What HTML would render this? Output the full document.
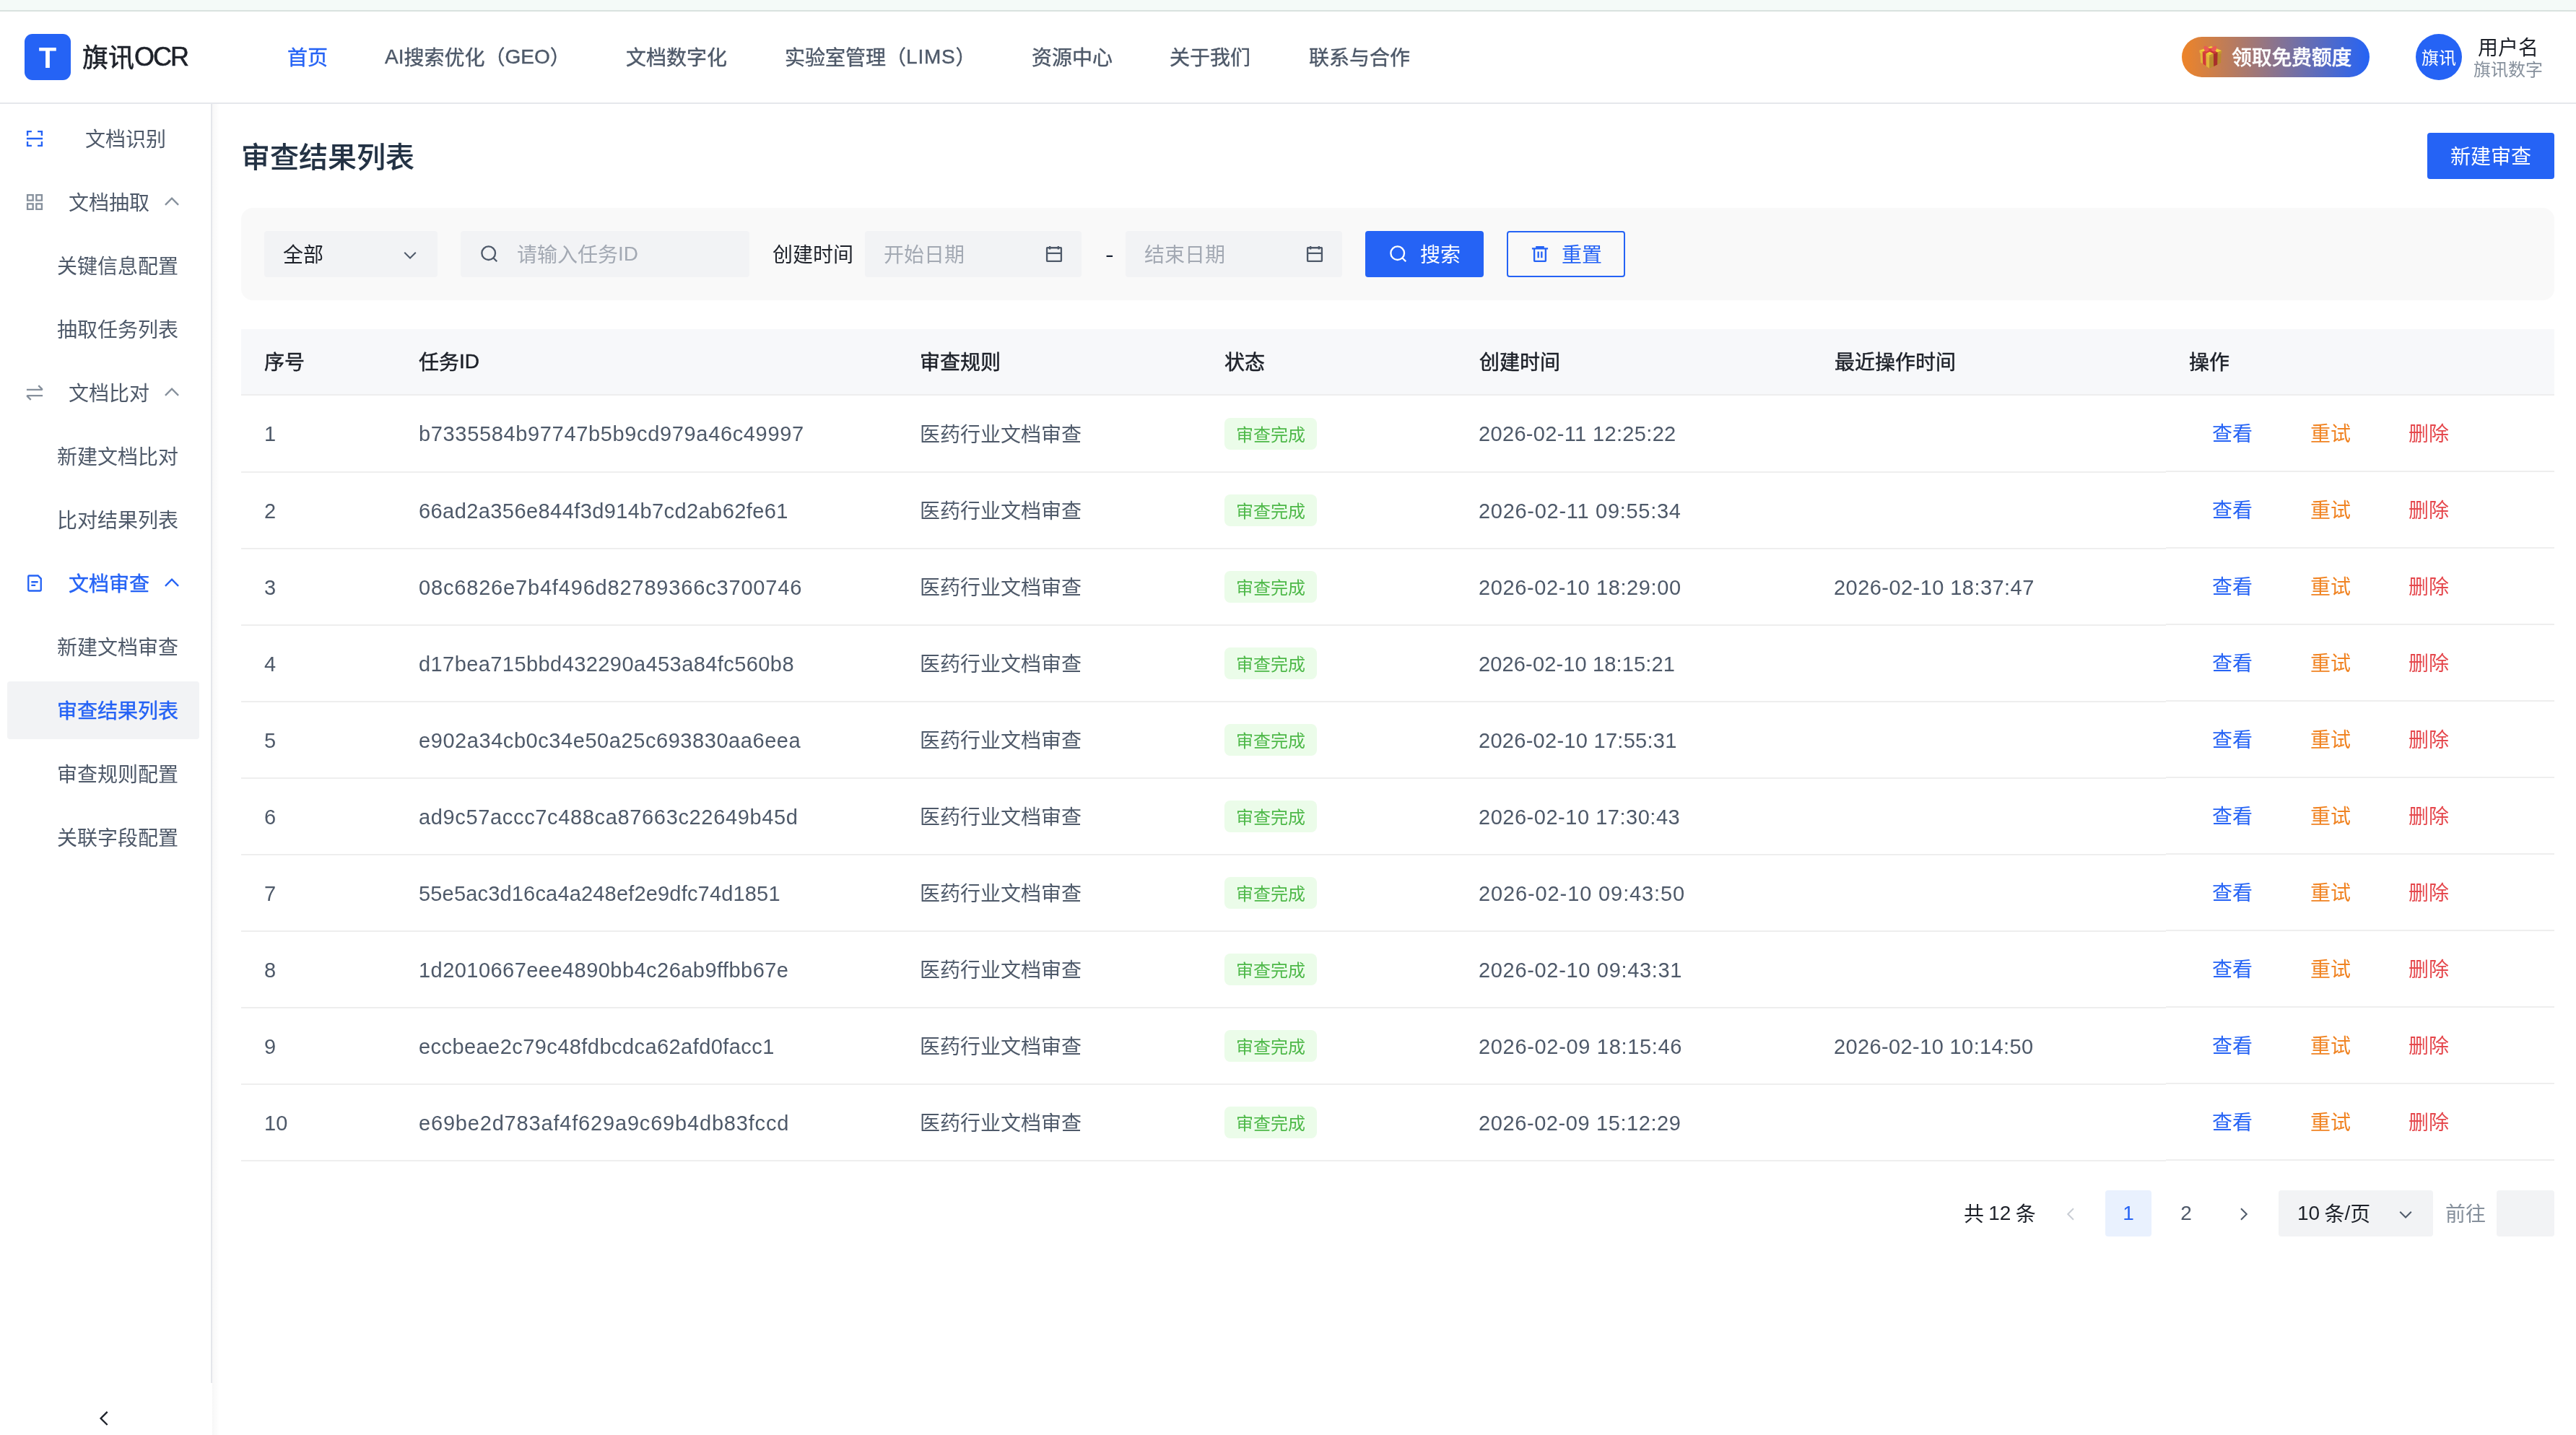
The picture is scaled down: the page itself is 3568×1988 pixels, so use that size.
<!DOCTYPE html><html lang="zh-CN"><head><meta charset="utf-8"><title>审查结果列表</title><style>
*{box-sizing:border-box;margin:0;padding:0}
html,body{width:3568px;height:1988px;overflow:hidden;background:#fff}
body{position:relative;font-family:"Liberation Sans","Noto Sans CJK SC",sans-serif;font-size:28px;color:#1d2129;-webkit-font-smoothing:antialiased;will-change:transform}
.abs{position:absolute}
.c{position:relative;top:2px}
.ic{display:block;flex:none}
.strip{left:0;top:0;width:3568px;height:14px;background:#f4faf8}
.stripb{left:0;top:14px;width:3568px;height:2px;background:#d9e2df}
.hdrb{left:0;top:142px;width:3568px;height:2px;background:#e5e7ec}
.logo{left:34px;top:47px;width:64px;height:64px;border-radius:11px;background:#2563f5;color:#fff;font-weight:700;font-size:40px;line-height:66px;text-align:center}
.brand{left:114px;top:47px;height:64px;line-height:64px;font-size:36px;font-weight:400;-webkit-text-stroke:.55px;color:#1d2129;white-space:nowrap}
.nav{top:51px;height:56px;line-height:56px;font-size:28px;font-weight:400;-webkit-text-stroke:.4px;color:#4e5969;white-space:nowrap}
.nav.on{color:#2563f5}
.pill{left:3022px;top:51px;width:260px;height:56px;border-radius:28px;background:linear-gradient(90deg,#ee8428 0%,#2563f5 100%);color:#fff;font-weight:500;-webkit-text-stroke:.3px;letter-spacing:-.3px;font-size:28px;line-height:56px;white-space:nowrap}
.avatar{left:3346px;top:47px;width:64px;height:64px;border-radius:50%;background:#2563f5;color:#fff;font-size:24px;line-height:64px;text-align:center}
.uname{left:3410px;top:47px;width:128px;text-align:center;font-size:28px;line-height:36px;color:#1d2129}
.uorg{left:3410px;top:80px;width:128px;text-align:center;font-size:24px;line-height:30px;color:#86909c}
.sideb{left:292px;top:144px;width:2px;height:1772px;background:#e5e6eb}
.sideshadow{left:294px;top:144px;width:10px;height:1844px;background:linear-gradient(90deg,rgba(0,0,0,.03),rgba(0,0,0,0))}
.mi{left:10px;width:266px;height:80px;line-height:80px;font-size:28px;color:#4e5969;white-space:nowrap;border-radius:4px}
.mi.sel{background:#f2f3f5;color:#2563f5;-webkit-text-stroke:.45px}
.mi.act{color:#2563f5;-webkit-text-stroke:.45px}
.mi .t{position:absolute;top:0}
.mi .ic{position:absolute;top:26px}
.title{left:334px;top:184px;height:64px;line-height:64px;font-size:40px;font-weight:500;-webkit-text-stroke:.15px;color:#233244;white-space:nowrap}
.btn{height:64px;line-height:64px;border-radius:4px;font-size:28px;white-space:nowrap;text-align:center}
.btn.pri{background:#2563f5;color:#fff}
.btn.out{border:2px solid #2563f5;color:#2563f5;background:transparent;line-height:60px}
.filter{left:334px;top:288px;width:3204px;height:128px;border-radius:16px;background:#f9f9f9}
.inp{top:320px;height:64px;line-height:64px;border-radius:4px;background:#f2f3f5;font-size:28px;white-space:nowrap}
.ph{color:#a3a9b3}
.th{left:334px;top:456px;width:3204px;height:90px;background:#f7f8fa}
.thb{left:334px;top:546px;width:3204px;height:2px;background:#eeeeee}
.thc{top:456px;height:90px;line-height:90px;font-weight:400;-webkit-text-stroke:.5px;color:#1d2129;white-space:nowrap}
.rb{height:2px;background:#eeeeee}
.td{height:104px;line-height:104px;color:#4e5969;white-space:nowrap}
.tid{letter-spacing:1.25px}
.dt{letter-spacing:.8px}
.tag{left:1696px;width:128px;height:44px;line-height:44px;border-radius:8px;background:#ebfce9;color:#4db848;font-size:24px;text-align:center}
.lnk{height:104px;line-height:104px;white-space:nowrap}
.pg{top:1649px;height:64px;line-height:64px;white-space:nowrap}
</style></head><body>
<div class="abs strip"></div><div class="abs stripb"></div><div class="abs hdrb"></div>
<div class="abs logo">T</div><div class="abs brand"><span class="c">旗讯</span><span style="letter-spacing:-2px">OCR</span></div>
<div class="abs nav on" style="left:398px"><span class="c">首页</span></div>
<div class="abs nav" style="left:533px">AI<span class="c">搜索优化（</span>GEO<span class="c">）</span></div>
<div class="abs nav" style="left:867px"><span class="c">文档数字化</span></div>
<div class="abs nav" style="left:1087px"><span class="c">实验室管理（</span><span style="letter-spacing:.8px">LIMS</span><span class="c">）</span></div>
<div class="abs nav" style="left:1429px"><span class="c">资源中心</span></div>
<div class="abs nav" style="left:1620px"><span class="c">关于我们</span></div>
<div class="abs nav" style="left:1813px"><span class="c">联系与合作</span></div>
<div class="abs pill"><svg class="abs" style="left:24px;top:12px" width="32" height="32" viewBox="0 0 32 32"><polygon points="1.5,9.5 14.3,15.5 14.3,31.8 2.2,23.5" fill="#e2b43b"/><polygon points="14.3,15.5 30.5,9.5 30.1,24 14.3,31.8" fill="#b98a2f"/><polygon points="0.4,6.8 16.5,1 31.4,7.2 14.3,13.6" fill="#efcf35"/><polygon points="0.4,6.8 14.3,13.6 14.3,16.8 0.7,10" fill="#e8bf3c"/><polygon points="14.3,13.6 31.4,7.2 31.2,10.4 14.3,16.8" fill="#c4952f"/><polygon points="4.7,8.8 9.4,11.2 9.6,28.6 5.2,25.6" fill="#d23a3a"/><polygon points="19.9,11.5 25.6,9.4 25.2,26.4 20.2,28.9" fill="#a82e2c"/><polygon points="4.7,8.8 9.4,11.2 23,4.6 19,3" fill="#d83c3c"/><polygon points="19.9,11.5 25.6,9.4 12.5,3.2 8.5,4.8" fill="#c93535"/><path d="M15.3 5.6C12 1 7.2-.2 6.6 1.6c-.6 2 .4 5.600 2.400 6.600 2 .8 5-.6 6.300-2.600Zm0 0C18.600 1 23.400-.2 24 1.600c.6 2-.4 5.600-2.400 6.600-2 .8-5-.6-6.300-2.600Z" fill="#ea5a55"/><circle cx="15.300" cy="5.800" r="2.100" fill="#d94542"/></svg><span class="abs" style="left:69px;top:0"><span class="c">领取免费额度</span></span></div>
<div class="abs avatar"><span class="c">旗讯</span></div><div class="abs uname"><span class="c">用户名</span></div><div class="abs uorg"><span class="c">旗讯数字</span></div>
<div class="abs sideb"></div><div class="abs sideshadow"></div>
<div class="abs mi " style="top:152px"><svg class="ic " style="left:24px;color:#2563f5" width="28" height="28" viewBox="0 0 48 48" fill="none" stroke="currentColor" stroke-width="4"><path d="M7 17V7h10M41 17V7H31M41 31v10H31M7 31v10h10M5 24h38"/></svg><span class="t" style="left:108px"><span class="c">文档识别</span></span></div>
<div class="abs mi " style="top:240px"><svg class="ic " style="left:24px;color:#86909c" width="28" height="28" viewBox="0 0 48 48" fill="none" stroke="currentColor" stroke-width="4"><path d="M7 7h13v13H7zM28 7h13v13H28zM7 28h13v13H7zM28 28h13v13H28z"/></svg><span class="t" style="left:85px"><span class="c">文档抽取</span></span><svg class="ic " style="left:214px;color:#86909c" width="28" height="28" viewBox="0 0 48 48" fill="none" stroke="currentColor" stroke-width="4"><path d="M39.6 30.557 24.043 15 8.487 30.557"/></svg></div>
<div class="abs mi " style="top:328px"><span class="t" style="left:69px"><span class="c">关键信息配置</span></span></div>
<div class="abs mi " style="top:416px"><span class="t" style="left:69px"><span class="c">抽取任务列表</span></span></div>
<div class="abs mi " style="top:504px"><svg class="ic " style="left:24px;color:#86909c" width="28" height="28" viewBox="0 0 48 48" fill="none" stroke="currentColor" stroke-width="4"><path d="M5 17h35.586c.89 0 1.337-1.077.707-1.707L33 7M43 31H7.414c-.89 0-1.337 1.077-.707 1.707L15 41"/></svg><span class="t" style="left:85px"><span class="c">文档比对</span></span><svg class="ic " style="left:214px;color:#86909c" width="28" height="28" viewBox="0 0 48 48" fill="none" stroke="currentColor" stroke-width="4"><path d="M39.6 30.557 24.043 15 8.487 30.557"/></svg></div>
<div class="abs mi " style="top:592px"><span class="t" style="left:69px"><span class="c">新建文档比对</span></span></div>
<div class="abs mi " style="top:680px"><span class="t" style="left:69px"><span class="c">比对结果列表</span></span></div>
<div class="abs mi act" style="top:768px"><svg class="ic " style="left:24px;color:#2563f5" width="28" height="28" viewBox="0 0 48 48" fill="none" stroke="currentColor" stroke-width="4"><path d="M16 21h16m-16 8h10m11 13H11a2 2 0 0 1-2-2V8a2 2 0 0 1 2-2h21l7 7v27a2 2 0 0 1-2 2Z"/></svg><span class="t" style="left:85px"><span class="c">文档审查</span></span><svg class="ic " style="left:214px;color:#2563f5" width="28" height="28" viewBox="0 0 48 48" fill="none" stroke="currentColor" stroke-width="4"><path d="M39.6 30.557 24.043 15 8.487 30.557"/></svg></div>
<div class="abs mi " style="top:856px"><span class="t" style="left:69px"><span class="c">新建文档审查</span></span></div>
<div class="abs mi sel" style="top:944px"><span class="t" style="left:69px"><span class="c">审查结果列表</span></span></div>
<div class="abs mi " style="top:1032px"><span class="t" style="left:69px"><span class="c">审查规则配置</span></span></div>
<div class="abs mi " style="top:1120px"><span class="t" style="left:69px"><span class="c">关联字段配置</span></span></div>
<div class="abs" style="left:130px;top:1951px;color:#1d2129"><svg class="ic " style="" width="28" height="28" viewBox="0 0 48 48" fill="none" stroke="currentColor" stroke-width="4"><path d="M32 8.4 16.444 23.956 32 39.513"/></svg></div>
<div class="abs title"><span class="c">审查结果列表</span></div>
<div class="abs btn pri" style="left:3362px;top:184px;width:176px"><span class="c">新建审查</span></div>
<div class="abs filter"></div>
<div class="abs inp" style="left:366px;width:240px"><span class="abs" style="left:26px;top:0;color:#1d2129"><span class="c">全部</span></span><svg class="ic " style="position:absolute;left:190px;top:21px;color:#4e5969" width="24" height="24" viewBox="0 0 48 48" fill="none" stroke="currentColor" stroke-width="4"><path d="M39.6 17.443 24.043 33 8.487 17.443"/></svg></div>
<div class="abs inp" style="left:638px;width:400px"><svg class="ic " style="position:absolute;left:26px;top:18px;color:#4e5969" width="28" height="28" viewBox="0 0 48 48" fill="none" stroke="currentColor" stroke-width="4"><path d="M33.072 33.071c6.248-6.248 6.248-16.379 0-22.627-6.249-6.249-16.38-6.249-22.628 0-6.248 6.248-6.248 16.379 0 22.627 6.248 6.248 16.38 6.248 22.628 0Zm0 0 8.485 8.485"/></svg><span class="abs ph" style="left:78px;top:0"><span class="c">请输入任务</span>ID</span></div>
<div class="abs" style="left:1070px;top:320px;height:64px;line-height:64px;color:#1d2129;white-space:nowrap"><span class="c">创建时间</span></div>
<div class="abs inp" style="left:1198px;width:300px"><span class="abs ph" style="left:26px;top:0"><span class="c">开始日期</span></span><svg class="ic " style="position:absolute;left:248px;top:18px;color:#4e5969" width="28" height="28" viewBox="0 0 48 48" fill="none" stroke="currentColor" stroke-width="4"><path d="M7 22h34M14 5v8m20-8v8M8 41h32a1 1 0 0 0 1-1V10a1 1 0 0 0-1-1H8a1 1 0 0 0-1 1v30a1 1 0 0 0 1 1Z"/></svg></div>
<div class="abs" style="left:1531px;top:321px;height:64px;line-height:64px;color:#162033;transform:scaleX(1.25);transform-origin:0 0">-</div>
<div class="abs inp" style="left:1559px;width:300px"><span class="abs ph" style="left:26px;top:0"><span class="c">结束日期</span></span><svg class="ic " style="position:absolute;left:248px;top:18px;color:#4e5969" width="28" height="28" viewBox="0 0 48 48" fill="none" stroke="currentColor" stroke-width="4"><path d="M7 22h34M14 5v8m20-8v8M8 41h32a1 1 0 0 0 1-1V10a1 1 0 0 0-1-1H8a1 1 0 0 0-1 1v30a1 1 0 0 0 1 1Z"/></svg></div>
<div class="abs btn pri" style="left:1891px;top:320px;width:164px"><svg class="ic " style="position:absolute;left:32px;top:18px" width="28" height="28" viewBox="0 0 48 48" fill="none" stroke="currentColor" stroke-width="4"><path d="M33.072 33.071c6.248-6.248 6.248-16.379 0-22.627-6.249-6.249-16.38-6.249-22.628 0-6.248 6.248-6.248 16.379 0 22.627 6.248 6.248 16.38 6.248 22.628 0Zm0 0 8.485 8.485"/></svg><span class="abs" style="left:76px;top:0"><span class="c">搜索</span></span></div>
<div class="abs btn out" style="left:2087px;top:320px;width:164px"><svg class="ic " style="position:absolute;left:30px;top:16px" width="28" height="28" viewBox="0 0 48 48" fill="none" stroke="currentColor" stroke-width="4"><path d="M5 11h5.5m0 0v29a1 1 0 0 0 1 1h25a1 1 0 0 0 1-1V11m-27 0H16m21.5 0H43m-5.5 0H32m-16 0V7h16v4m-16 0h16M20 18v15m8-15v15"/></svg><span class="abs" style="left:74px;top:0"><span class="c">重置</span></span></div>
<div class="abs th"></div><div class="abs thb"></div>
<div class="abs thc" style="left:366px"><span class="c">序号</span></div>
<div class="abs thc" style="left:580px"><span class="c">任务</span>ID</div>
<div class="abs thc" style="left:1274px"><span class="c">审查规则</span></div>
<div class="abs thc" style="left:1696px"><span class="c">状态</span></div>
<div class="abs thc" style="left:2049px"><span class="c">创建时间</span></div>
<div class="abs thc" style="left:2541px"><span class="c">最近操作时间</span></div>
<div class="abs thc" style="left:3032px"><span class="c">操作</span></div>
<div class="abs rb" style="left:334px;top:653px;width:2666px"></div>
<div class="abs rb" style="left:3000px;top:652px;width:538px"></div>
<div class="abs td" style="left:366px;top:548px;height:105px;line-height:107px;font-size:29px">1</div>
<div class="abs td" style="left:580px;top:548px;height:105px;line-height:107px;font-size:29px;letter-spacing:0.653px">b7335584b97747b5b9cd979a46c49997</div>
<div class="abs td" style="left:1274px;top:548px;height:105px;line-height:105px"><span class="c">医药行业文档审查</span></div>
<div class="abs tag" style="top:579px"><span class="c">审查完成</span></div>
<div class="abs td" style="left:2048px;top:548px;height:105px;line-height:107px;font-size:29px;letter-spacing:0.339px">2026-02-11 12:25:22</div>
<div class="abs lnk" style="left:3064px;top:548px;color:#2563f5"><span class="c">查看</span></div>
<div class="abs lnk" style="left:3200px;top:548px;color:#f08322"><span class="c">重试</span></div>
<div class="abs lnk" style="left:3336px;top:548px;color:#e5484d"><span class="c">删除</span></div>
<div class="abs rb" style="left:334px;top:759px;width:2666px"></div>
<div class="abs rb" style="left:3000px;top:758px;width:538px"></div>
<div class="abs td" style="left:366px;top:655px;height:104px;line-height:106px;font-size:29px">2</div>
<div class="abs td" style="left:580px;top:655px;height:104px;line-height:106px;font-size:29px;letter-spacing:0.424px">66ad2a356e844f3d914b7cd2ab62fe61</div>
<div class="abs td" style="left:1274px;top:655px;height:104px;line-height:104px"><span class="c">医药行业文档审查</span></div>
<div class="abs tag" style="top:685px"><span class="c">审查完成</span></div>
<div class="abs td" style="left:2048px;top:655px;height:104px;line-height:106px;font-size:29px;letter-spacing:0.711px">2026-02-11 09:55:34</div>
<div class="abs lnk" style="left:3064px;top:654px;color:#2563f5"><span class="c">查看</span></div>
<div class="abs lnk" style="left:3200px;top:654px;color:#f08322"><span class="c">重试</span></div>
<div class="abs lnk" style="left:3336px;top:654px;color:#e5484d"><span class="c">删除</span></div>
<div class="abs rb" style="left:334px;top:865px;width:2666px"></div>
<div class="abs rb" style="left:3000px;top:864px;width:538px"></div>
<div class="abs td" style="left:366px;top:761px;height:104px;line-height:106px;font-size:29px">3</div>
<div class="abs td" style="left:580px;top:761px;height:104px;line-height:106px;font-size:29px;letter-spacing:0.824px">08c6826e7b4f496d82789366c3700746</div>
<div class="abs td" style="left:1274px;top:761px;height:104px;line-height:104px"><span class="c">医药行业文档审查</span></div>
<div class="abs tag" style="top:791px"><span class="c">审查完成</span></div>
<div class="abs td" style="left:2048px;top:761px;height:104px;line-height:106px;font-size:29px;letter-spacing:0.600px">2026-02-10 18:29:00</div>
<div class="abs td" style="left:2540px;top:761px;height:104px;line-height:106px;font-size:29px;letter-spacing:0.444px">2026-02-10 18:37:47</div>
<div class="abs lnk" style="left:3064px;top:760px;color:#2563f5"><span class="c">查看</span></div>
<div class="abs lnk" style="left:3200px;top:760px;color:#f08322"><span class="c">重试</span></div>
<div class="abs lnk" style="left:3336px;top:760px;color:#e5484d"><span class="c">删除</span></div>
<div class="abs rb" style="left:334px;top:971px;width:2666px"></div>
<div class="abs rb" style="left:3000px;top:970px;width:538px"></div>
<div class="abs td" style="left:366px;top:867px;height:104px;line-height:106px;font-size:29px">4</div>
<div class="abs td" style="left:580px;top:867px;height:104px;line-height:106px;font-size:29px;letter-spacing:0.424px">d17bea715bbd432290a453a84fc560b8</div>
<div class="abs td" style="left:1274px;top:867px;height:104px;line-height:104px"><span class="c">医药行业文档审查</span></div>
<div class="abs tag" style="top:897px"><span class="c">审查完成</span></div>
<div class="abs td" style="left:2048px;top:867px;height:104px;line-height:106px;font-size:29px;letter-spacing:0.144px">2026-02-10 18:15:21</div>
<div class="abs lnk" style="left:3064px;top:866px;color:#2563f5"><span class="c">查看</span></div>
<div class="abs lnk" style="left:3200px;top:866px;color:#f08322"><span class="c">重试</span></div>
<div class="abs lnk" style="left:3336px;top:866px;color:#e5484d"><span class="c">删除</span></div>
<div class="abs rb" style="left:334px;top:1077px;width:2666px"></div>
<div class="abs rb" style="left:3000px;top:1076px;width:538px"></div>
<div class="abs td" style="left:366px;top:973px;height:104px;line-height:106px;font-size:29px">5</div>
<div class="abs td" style="left:580px;top:973px;height:104px;line-height:106px;font-size:29px;letter-spacing:0.563px">e902a34cb0c34e50a25c693830aa6eea</div>
<div class="abs td" style="left:1274px;top:973px;height:104px;line-height:104px"><span class="c">医药行业文档审查</span></div>
<div class="abs tag" style="top:1003px"><span class="c">审查完成</span></div>
<div class="abs td" style="left:2048px;top:973px;height:104px;line-height:106px;font-size:29px;letter-spacing:0.283px">2026-02-10 17:55:31</div>
<div class="abs lnk" style="left:3064px;top:972px;color:#2563f5"><span class="c">查看</span></div>
<div class="abs lnk" style="left:3200px;top:972px;color:#f08322"><span class="c">重试</span></div>
<div class="abs lnk" style="left:3336px;top:972px;color:#e5484d"><span class="c">删除</span></div>
<div class="abs rb" style="left:334px;top:1183px;width:2666px"></div>
<div class="abs rb" style="left:3000px;top:1182px;width:538px"></div>
<div class="abs td" style="left:366px;top:1079px;height:104px;line-height:106px;font-size:29px">6</div>
<div class="abs td" style="left:580px;top:1079px;height:104px;line-height:106px;font-size:29px;letter-spacing:0.653px">ad9c57accc7c488ca87663c22649b45d</div>
<div class="abs td" style="left:1274px;top:1079px;height:104px;line-height:104px"><span class="c">医药行业文档审查</span></div>
<div class="abs tag" style="top:1109px"><span class="c">审查完成</span></div>
<div class="abs td" style="left:2048px;top:1079px;height:104px;line-height:106px;font-size:29px;letter-spacing:0.522px">2026-02-10 17:30:43</div>
<div class="abs lnk" style="left:3064px;top:1078px;color:#2563f5"><span class="c">查看</span></div>
<div class="abs lnk" style="left:3200px;top:1078px;color:#f08322"><span class="c">重试</span></div>
<div class="abs lnk" style="left:3336px;top:1078px;color:#e5484d"><span class="c">删除</span></div>
<div class="abs rb" style="left:334px;top:1289px;width:2666px"></div>
<div class="abs rb" style="left:3000px;top:1288px;width:538px"></div>
<div class="abs td" style="left:366px;top:1185px;height:104px;line-height:106px;font-size:29px">7</div>
<div class="abs td" style="left:580px;top:1185px;height:104px;line-height:106px;font-size:29px;letter-spacing:0.176px">55e5ac3d16ca4a248ef2e9dfc74d1851</div>
<div class="abs td" style="left:1274px;top:1185px;height:104px;line-height:104px"><span class="c">医药行业文档审查</span></div>
<div class="abs tag" style="top:1215px"><span class="c">审查完成</span></div>
<div class="abs td" style="left:2048px;top:1185px;height:104px;line-height:106px;font-size:29px;letter-spacing:0.883px">2026-02-10 09:43:50</div>
<div class="abs lnk" style="left:3064px;top:1184px;color:#2563f5"><span class="c">查看</span></div>
<div class="abs lnk" style="left:3200px;top:1184px;color:#f08322"><span class="c">重试</span></div>
<div class="abs lnk" style="left:3336px;top:1184px;color:#e5484d"><span class="c">删除</span></div>
<div class="abs rb" style="left:334px;top:1395px;width:2666px"></div>
<div class="abs rb" style="left:3000px;top:1394px;width:538px"></div>
<div class="abs td" style="left:366px;top:1291px;height:104px;line-height:106px;font-size:29px">8</div>
<div class="abs td" style="left:580px;top:1291px;height:104px;line-height:106px;font-size:29px;letter-spacing:0.456px">1d2010667eee4890bb4c26ab9ffbb67e</div>
<div class="abs td" style="left:1274px;top:1291px;height:104px;line-height:104px"><span class="c">医药行业文档审查</span></div>
<div class="abs tag" style="top:1321px"><span class="c">审查完成</span></div>
<div class="abs td" style="left:2048px;top:1291px;height:104px;line-height:106px;font-size:29px;letter-spacing:0.678px">2026-02-10 09:43:31</div>
<div class="abs lnk" style="left:3064px;top:1290px;color:#2563f5"><span class="c">查看</span></div>
<div class="abs lnk" style="left:3200px;top:1290px;color:#f08322"><span class="c">重试</span></div>
<div class="abs lnk" style="left:3336px;top:1290px;color:#e5484d"><span class="c">删除</span></div>
<div class="abs rb" style="left:334px;top:1501px;width:2666px"></div>
<div class="abs rb" style="left:3000px;top:1500px;width:538px"></div>
<div class="abs td" style="left:366px;top:1397px;height:104px;line-height:106px;font-size:29px">9</div>
<div class="abs td" style="left:580px;top:1397px;height:104px;line-height:106px;font-size:29px;letter-spacing:0.434px">eccbeae2c79c48fdbcdca62afd0facc1</div>
<div class="abs td" style="left:1274px;top:1397px;height:104px;line-height:104px"><span class="c">医药行业文档审查</span></div>
<div class="abs tag" style="top:1427px"><span class="c">审查完成</span></div>
<div class="abs td" style="left:2048px;top:1397px;height:104px;line-height:106px;font-size:29px;letter-spacing:0.678px">2026-02-09 18:15:46</div>
<div class="abs td" style="left:2540px;top:1397px;height:104px;line-height:106px;font-size:29px;letter-spacing:0.383px">2026-02-10 10:14:50</div>
<div class="abs lnk" style="left:3064px;top:1396px;color:#2563f5"><span class="c">查看</span></div>
<div class="abs lnk" style="left:3200px;top:1396px;color:#f08322"><span class="c">重试</span></div>
<div class="abs lnk" style="left:3336px;top:1396px;color:#e5484d"><span class="c">删除</span></div>
<div class="abs rb" style="left:334px;top:1607px;width:2666px"></div>
<div class="abs rb" style="left:3000px;top:1606px;width:538px"></div>
<div class="abs td" style="left:366px;top:1503px;height:104px;line-height:106px;font-size:29px">10</div>
<div class="abs td" style="left:580px;top:1503px;height:104px;line-height:106px;font-size:29px;letter-spacing:0.818px">e69be2d783af4f629a9c69b4db83fccd</div>
<div class="abs td" style="left:1274px;top:1503px;height:104px;line-height:104px"><span class="c">医药行业文档审查</span></div>
<div class="abs tag" style="top:1533px"><span class="c">审查完成</span></div>
<div class="abs td" style="left:2048px;top:1503px;height:104px;line-height:106px;font-size:29px;letter-spacing:0.594px">2026-02-09 15:12:29</div>
<div class="abs lnk" style="left:3064px;top:1502px;color:#2563f5"><span class="c">查看</span></div>
<div class="abs lnk" style="left:3200px;top:1502px;color:#f08322"><span class="c">重试</span></div>
<div class="abs lnk" style="left:3336px;top:1502px;color:#e5484d"><span class="c">删除</span></div>
<div class="abs pg" style="left:2720px;color:#1d2129;word-spacing:-1.5px"><span class="c">共</span> 12 <span class="c">条</span></div>
<div class="abs" style="left:2855.7px;top:1670px;color:#c9cdd4"><svg class="ic " style="" width="24" height="24" viewBox="0 0 48 48" fill="none" stroke="currentColor" stroke-width="4"><path d="M32 8.4 16.444 23.956 32 39.513"/></svg></div>
<div class="abs pg" style="left:2916px;width:64px;text-align:center;background:#e9f1fe;color:#2563f5;border-radius:4px">1</div>
<div class="abs pg" style="left:2996px;width:64px;text-align:center;color:#4e5969">2</div>
<div class="abs" style="left:3096.4px;top:1670px;color:#4e5969"><svg class="ic " style="" width="24" height="24" viewBox="0 0 48 48" fill="none" stroke="currentColor" stroke-width="4"><path d="m16 39.513 15.556-15.557L16 8.4"/></svg></div>
<div class="abs pg" style="left:3156px;width:214px;background:#f2f3f5;border-radius:4px"><span class="abs" style="left:26px;top:0;color:#1d2129;word-spacing:-1.5px">10 <span class="c">条</span>/<span class="c">页</span></span><svg class="ic " style="position:absolute;left:164px;top:21px;color:#4e5969" width="24" height="24" viewBox="0 0 48 48" fill="none" stroke="currentColor" stroke-width="4"><path d="M39.6 17.443 24.043 33 8.487 17.443"/></svg></div>
<div class="abs pg" style="left:3387px;color:#86909c"><span class="c">前往</span></div>
<div class="abs pg" style="left:3458px;width:80px;background:#f2f3f5;border-radius:4px"></div>
<script>(function(){var w=window.innerWidth;if(w&&Math.abs(w-3568)>2){document.documentElement.style.zoom=w/3568;}})();</script>
</body></html>
